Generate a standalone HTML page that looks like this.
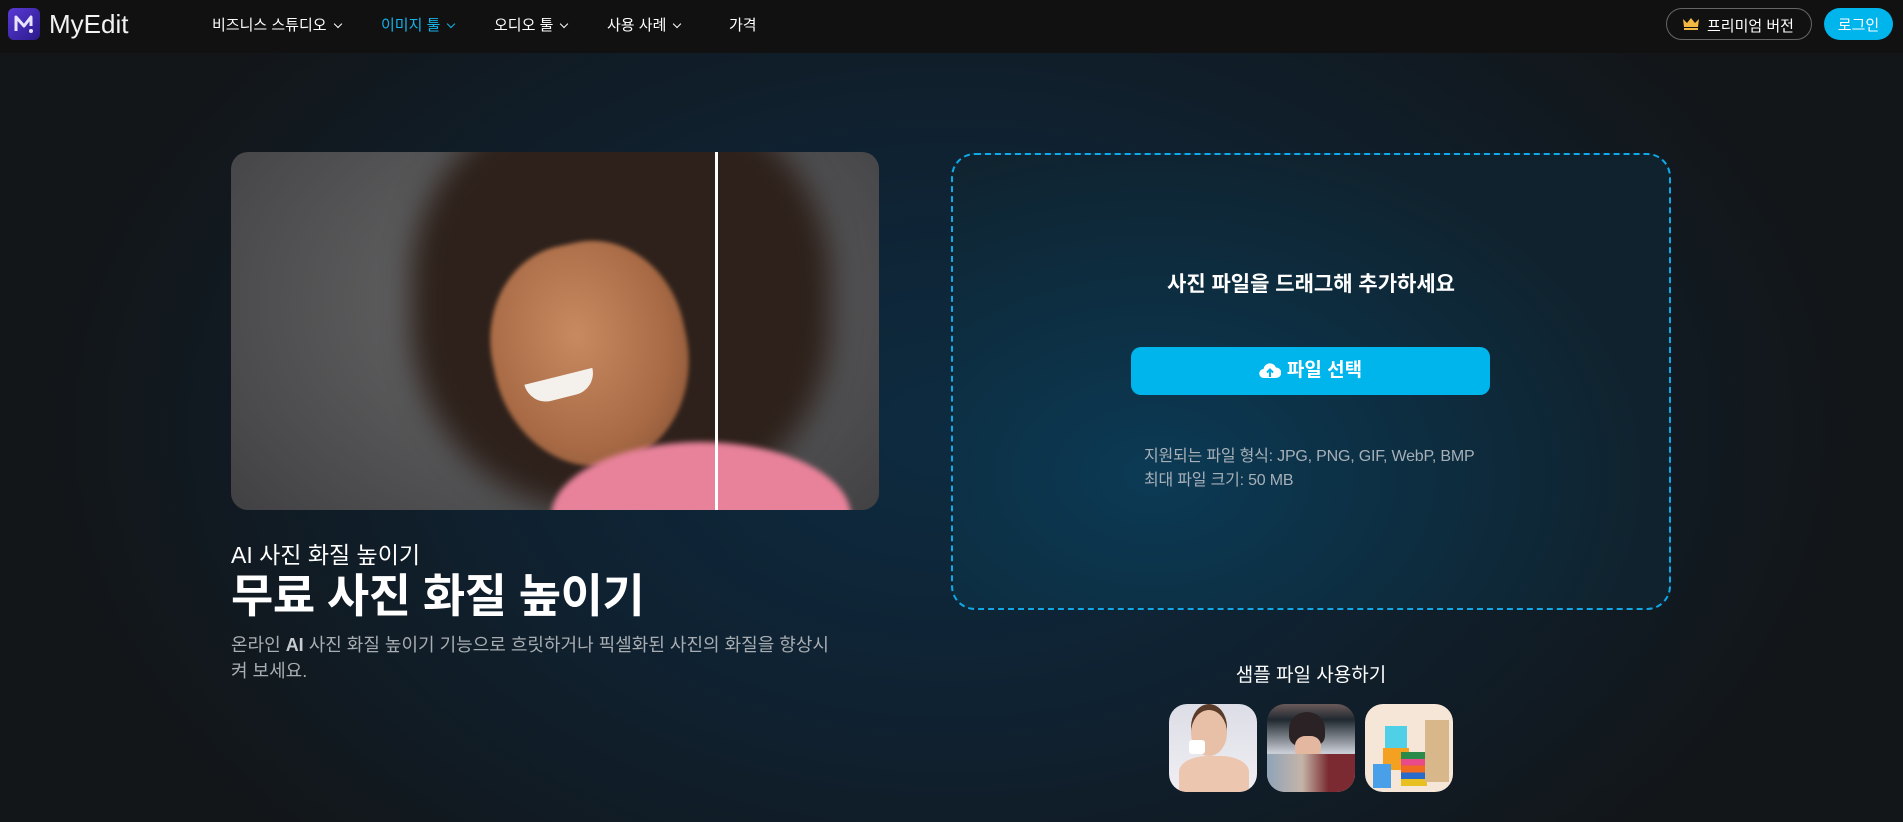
<!DOCTYPE html>
<html><head><meta charset="utf-8"><style>
*{margin:0;padding:0;box-sizing:border-box}
body{width:1903px;height:822px;overflow:hidden;font-family:"Liberation Sans","Noto Sans CJK KR",sans-serif;color:#fff;
background:radial-gradient(ellipse 900px 600px at 950px 430px,#0d2b40 0%,#0f2232 45%,#121619 100%);position:relative}
.hdr{position:absolute;left:0;top:0;width:1903px;height:53px;background:#111}
.abs{position:absolute}
.nav{top:14px;font-size:15px;white-space:nowrap}
.chev{display:inline-block;width:6px;height:6px;border-right:1.5px solid currentColor;border-bottom:1.5px solid currentColor;transform:rotate(45deg);margin-left:8px;position:relative;top:-3px}
</style></head><body>
<div class="hdr"></div>
<div class="abs" style="left:8px;top:8px;width:32px;height:32px;border-radius:6px;background:linear-gradient(135deg,#5a3ad6,#2a1a8a)">
<svg width="32" height="32" viewBox="0 0 32 32"><path d="M8 23V9l8 9 7-9v9" stroke="#e8e4ff" stroke-width="3" fill="none" stroke-linejoin="round"/><circle cx="23" cy="23" r="2" fill="#e8e4ff"/></svg></div>
<div class="abs" style="left:49px;top:9px;font-size:26px;color:#f2f2f2">MyEdit</div>
<div class="abs nav" style="left:212px">비즈니스 스튜디오<span class="chev"></span></div>
<div class="abs nav" style="left:381px;color:#16b3ea">이미지 툴<span class="chev"></span></div>
<div class="abs nav" style="left:494px">오디오 툴<span class="chev"></span></div>
<div class="abs nav" style="left:607px">사용 사례<span class="chev"></span></div>
<div class="abs nav" style="left:729px">가격</div>
<div class="abs" style="left:1666px;top:8px;width:146px;height:32px;border:1.5px solid #666;border-radius:16px;font-size:15px;padding:6px 0 0 40px">
<svg class="abs" style="left:15px;top:8px" width="18" height="14" viewBox="0 0 18 14"><path d="M1 2l4 4 4-5 4 5 4-4-1 8H2z" fill="#f4b942"/><rect x="2" y="11" width="14" height="2" fill="#f4b942"/></svg>프리미엄 버전</div>
<div class="abs" style="left:1824px;top:8px;width:69px;height:32px;border-radius:16px;background:#00b4ec;font-size:15px;display:flex;align-items:center;justify-content:center">로그인</div>

<div class="abs" style="left:231px;top:152px;width:648px;height:358px;border-radius:17px;overflow:hidden;background:radial-gradient(ellipse 500px 360px at 330px 150px,#6b6b6b,#4a4a4c 70%,#3a3a3c)">
<div class="abs" style="left:180px;top:-60px;width:420px;height:420px;border-radius:45%;background:#2e211b;filter:blur(14px)"></div>
<div class="abs" style="left:262px;top:90px;width:195px;height:225px;border-radius:45% 45% 50% 50%;background:radial-gradient(ellipse at 45% 40%,#c88a60,#a86a45 60%,#7a4a30);transform:rotate(-12deg);filter:blur(2px)"></div>
<div class="abs" style="left:295px;top:224px;width:70px;height:22px;border-radius:0 0 40px 40px;background:#f4f0ec;transform:rotate(-14deg)"></div>
<div class="abs" style="left:320px;top:290px;width:300px;height:150px;border-radius:50% 50% 0 0;background:#e8829a;filter:blur(3px)"></div>
<div class="abs" style="left:484px;top:0;width:3px;height:358px;background:#fff"></div>
</div>

<div class="abs" style="left:231px;top:536px;font-size:23px">AI 사진 화질 높이기</div>
<div class="abs" style="left:231px;top:560px;font-size:46px;font-weight:bold;letter-spacing:-0.5px">무료 사진 화질 높이기</div>
<div class="abs" style="left:231px;top:632px;width:660px;font-size:18px;line-height:26px;color:#a8adb2">온라인 <b style="color:#c8ccd0">AI</b> 사진 화질 높이기 기능으로 흐릿하거나 픽셀화된 사진의 화질을 향상시<br>켜 보세요.</div>

<div class="abs" style="left:951px;top:153px;width:720px;height:457px;border:2px dashed #10a8e6;border-radius:24px;background:radial-gradient(ellipse 500px 350px at 200px 320px,#0c3a55,#0d2c3e 60%,#10222e)"></div>
<div class="abs" style="left:951px;top:268px;width:720px;text-align:center;font-size:21px;font-weight:bold">사진 파일을 드래그해 추가하세요</div>
<div class="abs" style="left:1131px;top:347px;width:359px;height:48px;border-radius:10px;background:#00b4ec;text-align:center;font-size:19px;font-weight:bold;line-height:48px">
<svg style="vertical-align:-3px;margin-right:6px" width="22" height="18" viewBox="0 0 22 18"><path d="M5 17a4.5 4.5 0 0 1-.5-9A6.5 6.5 0 0 1 17 6.5 5 5 0 0 1 17 17z" fill="#fff"/><path d="M11 16V9M8 11.5l3-3 3 3" stroke="#00b4ec" stroke-width="2" fill="none"/></svg>파일 선택</div>
<div class="abs" style="left:1144px;top:445px;font-size:16px;line-height:24px;color:#a6b0b8;letter-spacing:-0.2px">지원되는 파일 형식: JPG, PNG, GIF, WebP, BMP<br>최대 파일 크기: 50 MB</div>

<div class="abs" style="left:951px;top:660px;width:720px;text-align:center;font-size:19px">샘플 파일 사용하기</div>
<div class="abs" style="left:1169px;top:704px;width:88px;height:88px;border-radius:18px;overflow:hidden;background:linear-gradient(#dcdde6,#f0eff4)">
<div class="abs" style="left:22px;top:6px;width:36px;height:46px;border-radius:50%;background:#e8c0a8;box-shadow:0 -6px 0 #5a3a28"></div>
<div class="abs" style="left:10px;top:52px;width:70px;height:40px;border-radius:40% 40% 0 0;background:#ecc6ae"></div>
<div class="abs" style="left:20px;top:36px;width:16px;height:14px;border-radius:3px;background:#fff"></div></div>
<div class="abs" style="left:1267px;top:704px;width:88px;height:88px;border-radius:18px;overflow:hidden;background:linear-gradient(#6a5a5a 0,#202830 18%,#c8ccd4 55%)">
<div class="abs" style="left:22px;top:8px;width:36px;height:34px;border-radius:50% 50% 30% 30%;background:#2a2224"></div>
<div class="abs" style="left:28px;top:32px;width:26px;height:24px;border-radius:40%;background:#e4b8a0"></div>
<div class="abs" style="left:0;top:50px;width:88px;height:40px;background:linear-gradient(90deg,#8fa4b8,#c4b4a8 40%,#7a2a30 70%)"></div></div>
<div class="abs" style="left:1365px;top:704px;width:88px;height:88px;border-radius:18px;overflow:hidden;background:#f6e6d8">
<div class="abs" style="left:20px;top:22px;width:22px;height:22px;background:#4fd0e6"></div>
<div class="abs" style="left:18px;top:44px;width:26px;height:22px;background:#f4a020"></div>
<div class="abs" style="left:8px;top:60px;width:18px;height:24px;background:#4aa0e8"></div>
<div class="abs" style="left:36px;top:48px;width:26px;height:34px;background:linear-gradient(#2a8a4a 0 20%,#e84a8a 20% 40%,#f06a20 40% 60%,#2a6ac8 60% 80%,#e8c020 80%)"></div>
<div class="abs" style="left:60px;top:16px;width:24px;height:62px;background:#d8b88a"></div></div>
</body></html>
